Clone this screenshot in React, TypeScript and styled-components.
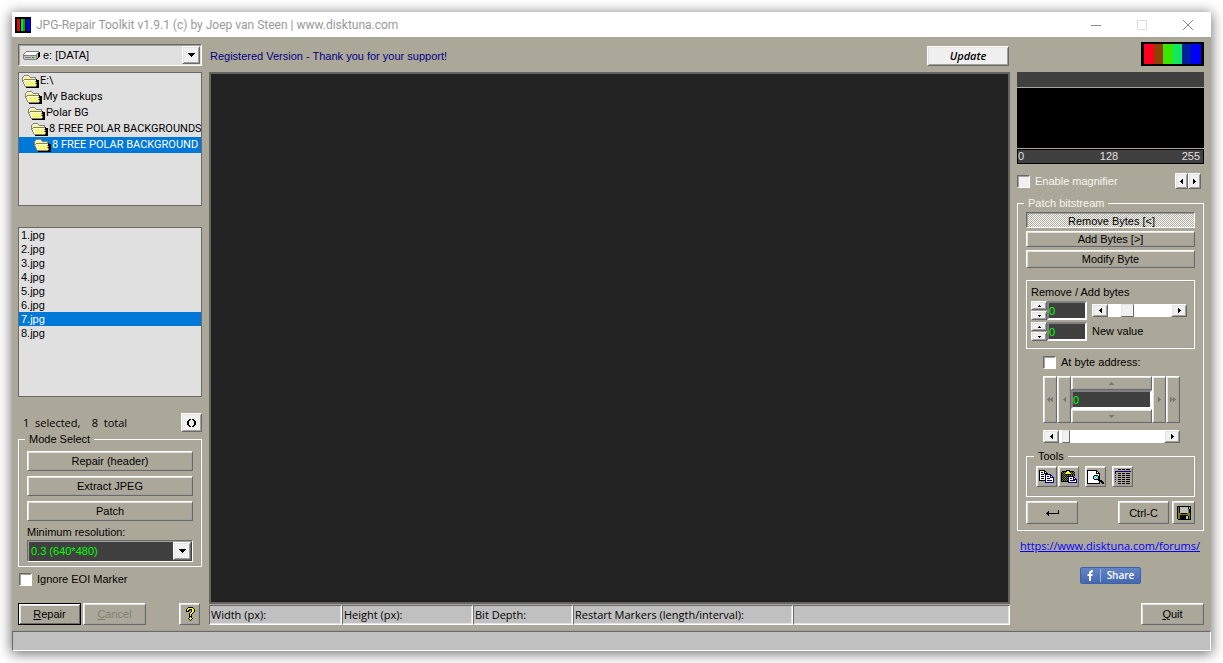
import React, { useState } from "react";
import styled, { createGlobalStyle, css } from "styled-components";

const FACE = "#aca899";
const SANS = `"Liberation Sans", Arial, sans-serif`;
const HUMAN = `"Open Sans", "Noto Sans", sans-serif`;
const NARROW = `Roboto, "Liberation Sans", sans-serif`;

const GlobalStyle = createGlobalStyle`
  *, *::before, *::after { box-sizing: border-box; }
  body { margin: 0; background: #fff; font: 11px/14px ${SANS}; color: #000; }
  button, input, select { font: inherit; color: inherit; margin: 0; padding: 0; border-radius: 0; }
  ul { list-style: none; margin: 0; padding: 0; }
`;

const raised = css`
  border: 1px solid;
  border-color: #fff #696969 #696969 #fff;
  box-shadow: inset 1px 1px 0 #e3e3e3, inset -1px -1px 0 #a0a0a0;
`;

const sunken = css`
  border: 1px solid;
  border-color: #696969 #fff #fff #696969;
`;

/* ---------- pixel icons ---------- */

const PALETTE: Record<string, string> = {
  k: "#000000",
  w: "#ffffff",
  g: "#808080",
  s: "#c0c0c0",
  y: "#ffff00",
  o: "#808000",
  b: "#000080",
  c: "#00ffff",
  n: "#00a000",
};

function PixelIcon({ rows }: { rows: string[] }) {
  const width = Math.max(...rows.map((r) => r.length));
  return (
    <svg width={width} height={rows.length} shapeRendering="crispEdges" aria-hidden="true">
      {rows.flatMap((row, y) =>
        [...row].map((ch, x) =>
          PALETTE[ch] ? <rect key={`${x}-${y}`} x={x} y={y} width={1} height={1} fill={PALETTE[ch]} /> : null,
        ),
      )}
    </svg>
  );
}

const FOLDER = [
  "..ggggg",
  ".gwwwwwg",
  "gwywywywgggggg",
  "gywywywywywywg",
  "gwggggggggggggk",
  "ggwwwwwwwwwwwwkkk",
  "gwywywywywywygkkk",
  ".gwywywywywywygkk",
  ".gwwywywywywygkkk",
  "..gwywywywywywgkk",
  "..gwwywywywywygkk",
  "...gggggggggggkkk",
  "....kkkkkkkkkkkkk",
];

const DRIVE = [
  "...ggggggggggggg",
  "..gwwwwwwwwwwwwgk",
  ".gwwwwwwwwwwwwgkk",
  "gwwwwwwwwwwwwgskk",
  "ggggggggggggggskk",
  "gssssssssssssgskk",
  "gsggggggsnnssgsk",
  "gssssssssssssgk",
  ".ggggggggggggg",
];

const COPY = [
  "kkkkkk",
  "kwwwwkk",
  "kwkkwkwk",
  "kwwwwkkkk",
  "kwkkkwbbbbbb",
  "kwwwwwbwwwwbb",
  "kwkkkwbwbbwbwb",
  "kwwwwwbwwwwbbbb",
  "kwkkkwbwbbbwwwb",
  "kwwwwwbwwwwwwwb",
  "kkkkkkbwbbbbbwb",
  "......bwwwwwwwb",
  "......bbbbbbbbb",
];

const PASTE = [
  ".....kkkk",
  ".kkkkkyykkkkk",
  "kokokyyyykokok",
  "kkokyyyyyykoko",
  "kokokkkkkkokok",
  "kkokokokokokok",
  "kokokokbbbbbb",
  "kkokokobwwwwbb",
  "kokokokbwbbwbwb",
  "kkokokobwwwwbbbb",
  "kokokokbwbbbbbwb",
  "kkkkkkkbwwwwwwwb",
  ".......bbbbbbbbb",
];

const PREVIEW = [
  "kkkkkkkkkk",
  "kwwwwwwwwkk",
  "kwwwwwwwwkwk",
  "kwwwwwwwwkkkk",
  "kwwwwwwwwwwwk",
  "kwwwwwwkkkkwk",
  "kwwwwwkcwcskk",
  "kwwwwwkwcwckk",
  "kwwwwwkcwcskk",
  "kwwwwwwkkkkkk",
  "kwwwwwwwwwwkkkk",
  "kwwwwwwwwwwwkkkk",
  "kwwwwwwwwwwwk.kkk",
  "kkkkkkkkkkkkk..kk",
];

const TABLE = [
  "...kkk.kkk.kkkk",
  "...............",
  "bbbbbbbbbbbbbbbb",
  "b...............",
  "b..kkk.kkk.kkkk",
  "...............",
  "b..kkk.kkk.kkkk",
  "...............",
  "b..kkk.kkk.kkkk",
  "...............",
  "b..kkk.kkk.kkkk",
  "...............",
  "b..kkk.kkk.kkkk",
  "...............",
  "...kkk.kkk.kkkk",
];

const SAVE = [
  "kkkkkkkkkkkkkk",
  "kokssssssssksk",
  "kokssssssssksk",
  "kokssssssssokk",
  "kokssssssssokk",
  "kokssssssssokk",
  "kokssssssssokk",
  "koookkkkkkoook",
  "kooooooooooook",
  "kookkkkkkkkook",
  "kookkkkkksskok",
  "kookkkkkksskok",
  "kookkkkkksskok",
  ".kkkkkkkkkkkkk",
];

const HELP = [
  "...kkkkk",
  "..kyyyyyk",
  ".kyykkkyyk",
  ".kykk.kyyk",
  ".kkk..kyyk",
  ".....kyyk",
  "....kyyk",
  "....kyk",
  "....kyk",
  "....kkk",
  "....kyk",
  "...kyyyk",
  "....kyk",
  ".....k",
];

const RETURN = [
  ".............k",
  "...k.........k",
  "..kk.........k",
  ".kkkkkkkkkkkkk",
  "..kk",
  "...k",
];

const REFRESH = [
  "..kk.kk..",
  ".kk...kk.",
  "kk.....kk",
  "kk.....kk",
  "kk.....kk",
  "kk.....kk",
  ".kk...kk.",
  "..kk.kk..",
];

type Direction = "left" | "right" | "up" | "down";

function Arrow({ dir, size = 4, color = "#000", double }: { dir: Direction; size?: number; color?: string; double?: boolean }) {
  const span = size * 2 - 1;
  const horizontal = dir === "left" || dir === "right";
  const w = horizontal ? (double ? size * 2 : size) : span;
  const h = horizontal ? span : size;
  const bars: React.ReactNode[] = [];
  for (let i = 0; i < size; i++) {
    const len = i * 2 + 1;
    const off = size - 1 - i;
    const at = dir === "left" || dir === "up" ? i : size - 1 - i;
    for (let n = 0; n < (double ? 2 : 1); n++) {
      bars.push(
        horizontal ? (
          <rect key={`${i}-${n}`} x={at + n * size} y={off} width={1} height={len} />
        ) : (
          <rect key={`${i}-${n}`} x={off} y={at} width={len} height={1} />
        ),
      );
    }
  }
  return (
    <svg width={w} height={h} fill={color} shapeRendering="crispEdges" aria-hidden="true">
      {bars}
    </svg>
  );
}

/* ---------- window ---------- */

const Desktop = styled.div`
  min-height: 100vh;
  padding: 12px;
  display: flex;
  overflow: hidden;
`;

const Window = styled.div`
  flex: 1;
  min-width: 0;
  display: flex;
  flex-direction: column;
  background: ${FACE};
  box-shadow: 0 2px 12px 1px rgba(0, 0, 0, 0.55);
`;

const TitleBar = styled.header`
  height: 25px;
  display: flex;
  align-items: center;
  gap: 5px;
  padding: 0 8px 0 3px;
  background: #fff;
  color: #999;
`;

const Title = styled.h1`
  flex: 1;
  margin: 0;
  font: 12px/16px ${NARROW};
`;

const CaptionButton = styled.button`
  width: 30px;
  height: 25px;
  margin-left: 11px;
  display: flex;
  align-items: center;
  justify-content: center;
  border: 0;
  background: none;
`;

const Body = styled.main`
  flex: 1;
  display: grid;
  grid-template-columns: 184px minmax(0, 1fr) 187px;
  gap: 7px;
  padding: 5px 7px 6px 6px;
`;

const Column = styled.div<{ $top?: number }>`
  display: flex;
  flex-direction: column;
  min-width: 0;
  padding-top: ${(p) => p.$top ?? 0}px;
`;

const Row = styled.div<{ $gap?: number; $top?: number; $start?: number; $end?: number }>`
  display: flex;
  align-items: center;
  gap: ${(p) => p.$gap ?? 0}px;
  margin-top: ${(p) => p.$top ?? 0}px;
  padding: 0 ${(p) => p.$end ?? 0}px 0 ${(p) => p.$start ?? 0}px;
`;

const Spacer = styled.span`
  flex: 1;
`;

const StatusBar = styled.footer`
  height: 20px;
  background: #c0c0c0;
  border: 1px solid;
  border-color: #696969 #fff #fff #696969;
  box-shadow: 0 -1px 0 #a0a0a0;
`;

/* ---------- controls ---------- */

const Button = styled.button<{ $w?: number; $h?: number; $light?: boolean; $default?: boolean }>`
  ${raised}
  ${(p) => p.$default && css`
    border-color: #000;
    box-shadow: inset 1px 1px 0 #fff, inset -1px -1px 0 #696969, inset 2px 2px 0 #e3e3e3;
  `}
  flex: none;
  display: flex;
  align-items: center;
  justify-content: center;
  width: ${(p) => (p.$w ? `${p.$w}px` : "100%")};
  height: ${(p) => p.$h ?? 20}px;
  background: ${(p) => (p.$light ? "#f0f0f0" : FACE)};
  white-space: pre;
  &:disabled { color: #808075; }
`;

const UpdateButton = styled(Button)`
  font: italic 600 11px/14px ${HUMAN};
`;

const PressedButton = styled(Button)`
  border-color: #696969 #fff #fff #696969;
  box-shadow: inset 1px 1px 0 #a0a0a0;
  background: repeating-conic-gradient(#fff 0 25%, ${FACE} 0 50%) 0 0 / 2px 2px;
  padding: 2px 0 0 2px;
`;

const ButtonStack = styled.div<{ $gap: number }>`
  display: flex;
  flex-direction: column;
  gap: ${(p) => p.$gap}px;
`;

const Combo = styled.div<{ $dark?: boolean }>`
  ${sunken}
  box-shadow: inset 1px 1px 0 #a0a0a0;
  height: 22px;
  display: grid;
  grid-template-columns: 22px 1fr 18px;
  align-items: center;
  background: ${(p) => (p.$dark ? "#404040" : "#e0e0e0")};
  color: ${(p) => (p.$dark ? "#00ff00" : "#000")};
  padding: 1px;
  svg { display: block; }
`;

const ComboSelect = styled.select<{ $indent: number }>`
  grid-area: 1 / 1 / 2 / 4;
  width: 100%;
  height: 18px;
  appearance: none;
  border: 0;
  outline: 0;
  background: transparent;
  padding-left: ${(p) => p.$indent}px;
`;

const ComboIcon = styled.span`
  grid-area: 1 / 1 / 2 / 2;
  padding-left: 3px;
  pointer-events: none;
`;

const ComboArrow = styled.span`
  ${raised}
  grid-area: 1 / 3 / 2 / 4;
  height: 18px;
  display: grid;
  place-items: center;
  background: #f0f0f0;
  pointer-events: none;
`;

const List = styled.ul<{ $h: number; $top: number }>`
  height: ${(p) => p.$h}px;
  margin-top: ${(p) => p.$top}px;
  border: 1px solid #696969;
  background: #e0e0e0;
  overflow: hidden;
`;

const ListItem = styled.li<{ $selected?: boolean }>`
  display: flex;
  align-items: center;
  height: 14px;
  padding-left: 2px;
  background: ${(p) => (p.$selected ? "#0078d7" : "transparent")};
  color: ${(p) => (p.$selected ? "#fff" : "#000")};
  white-space: nowrap;
  cursor: default;
`;

const FolderItem = styled(ListItem)<{ $depth: number }>`
  gap: 1px;
  height: 16px;
  padding-left: ${(p) => 3 + p.$depth * 3}px;
  font-family: ${NARROW};
  svg { flex: none; }
`;

const Group = styled.fieldset<{ $top?: number; $pad: string }>`
  min-width: 0;
  margin: ${(p) => p.$top ?? 0}px 0 0;
  border: 1px solid #fff;
  box-shadow: inset -1px -1px 0 #a0a0a0, inset 1px 0 0 #a0a0a0;
  padding: ${(p) => p.$pad};
`;

const Legend = styled.legend<{ $etched?: boolean }>`
  height: 14px;
  margin-left: -2px;
  padding: 0 4px;
  ${(p) => p.$etched && "color: #f6f5f0;"}
`;

const CheckLabel = styled.label<{ $off?: boolean }>`
  display: flex;
  align-items: center;
  gap: 5px;
  ${(p) => p.$off && "color: #f6f5f0;"}
`;

const CheckBox = styled.input`
  appearance: none;
  width: 13px;
  height: 13px;
  background: #fff;
  ${sunken}
  box-shadow: inset 1px 1px 0 #a0a0a0;
  &:disabled { background: #f0f0f0; }
  &:checked { background: #404040; }
`;

const Counter = styled.p`
  flex: 1;
  margin: 0;
  padding-left: 5px;
  font: 11px/14px ${HUMAN};
  white-space: pre;
`;

const FieldLabel = styled.label`
  display: block;
  line-height: 15px;
`;

const NumberBox = styled.input<{ $w?: number }>`
  width: ${(p) => (p.$w ? `${p.$w}px` : "100%")};
  min-width: 0;
  height: 19px;
  background: #404040;
  color: #00ff00;
  ${sunken}
  border-width: 2px;
  border-color: #808080 #fff #fff #808080;
  outline: 0;
`;

const SpinButtons = styled.div`
  display: flex;
  flex-direction: column;
  gap: 1px;
`;

const SubPanel = styled.section`
  margin-top: 12px;
  border: 1px solid #fff;
  box-shadow: inset -1px -1px 0 #a0a0a0, inset 1px 1px 0 #a0a0a0;
  padding: 4px 7px 7px 4px;
`;

const ScrollBar = styled.div`
  flex: 1;
  display: flex;
  min-width: 0;
  height: 13px;
  background: #fff;
`;

const ScrollRange = styled.input<{ $thumb: number }>`
  appearance: none;
  flex: 1;
  min-width: 0;
  height: 13px;
  background: #fff;
  outline: 0;
  &::-webkit-slider-thumb {
    appearance: none;
    width: ${(p) => p.$thumb}px;
    height: 13px;
    background: #f0f0f0;
    border: 1px solid;
    border-color: #e3e3e3 #696969 #696969 #e3e3e3;
  }
`;

const Navigator = styled.div`
  display: flex;
  height: 47px;
`;

const NavMiddle = styled.div`
  flex: 1;
  min-width: 0;
  display: flex;
  flex-direction: column;
`;

const AddressBlock = styled.div`
  display: flex;
  flex-direction: column;
  gap: 7px;
  margin-top: 6px;
  padding: 0 15px 0 17px;
`;

const ColorBars = styled.svg`
  display: block;
  align-self: flex-end;
  flex: none;
`;

const Histogram = styled.div`
  margin-top: 6px;
`;

const HistogramHead = styled.div`
  height: 15px;
  background: #404040;
`;

const HistogramPlot = styled.div`
  height: 62px;
  background: #000;
  border: solid ${FACE};
  border-width: 1px 0;
`;

const HistogramScale = styled.div`
  display: grid;
  grid-template-columns: 1fr auto 1fr;
  height: 15px;
  padding: 0 3px 0 0;
  border: 1px solid #000;
  background: #404040;
  color: #e0e0e0;
  line-height: 13px;
`;

const ScaleEnd = styled.span`
  text-align: right;
`;

const Notice = styled.p`
  flex: 1;
  margin: 0;
  color: #000080;
`;

const Canvas = styled.section`
  flex: 1;
  margin-top: 6px;
  border: 2px solid #646464;
  background: #222;
`;

const InfoStrip = styled.dl`
  display: grid;
  grid-template-columns: 133px 131px 100px 220px 1fr;
  margin: 1px 0 0;
`;

const InfoCell = styled.dt`
  ${sunken}
  box-shadow: inset -1px -1px 0 #e3e3e3;
  height: 20px;
  padding-left: 1px;
  background: #c0c0c0;
  font: 11px/18px ${HUMAN};
`;

const ForumLink = styled.a`
  margin-top: 7px;
  padding-left: 3px;
  color: #0000ff;
  font: 11px/16px ${HUMAN};
`;

const ShareButton = styled.button`
  display: grid;
  grid-template-columns: 19px 1fr;
  align-items: center;
  align-self: center;
  width: 61px;
  height: 17px;
  margin-top: 13px;
  border: 1px solid #3f62a6;
  border-radius: 2px;
  background: linear-gradient(#6285c6, #4468b0);
  color: #fff;
  font: 600 10px/15px ${HUMAN};
  svg { display: block; }
`;

const ShareText = styled.span`
  border-left: 1px solid #9db4dd;
  height: 13px;
  line-height: 13px;
`;

const BottomRow = styled(Row)`
  margin-top: auto;
`;

const FOLDERS = ["E:\\", "My Backups", "Polar BG", "8 FREE POLAR BACKGROUNDS", "8 FREE POLAR BACKGROUND"];
const FILES = Array.from({ length: 8 }, (_, i) => `${i + 1}.jpg`);
const MODES = ["Repair (header)", "Extract JPEG", "Patch"];

function Spinner({ id, label }: { id: string; label: string }) {
  return (
    <Row>
      <SpinButtons>
        <Button $w={16} $h={9} $light aria-label="Increase"><Arrow dir="up" size={2} /></Button>
        <Button $w={16} $h={9} $light aria-label="Decrease"><Arrow dir="down" size={2} /></Button>
      </SpinButtons>
      <NumberBox id={id} $w={40} defaultValue="0" aria-label={label} />
    </Row>
  );
}

function Scroll({ label, value, thumb }: { label: string; value: number; thumb: number }) {
  return (
    <ScrollBar>
      <Button $w={16} $h={13} $light aria-label={`${label} back`}><Arrow dir="left" size={3} /></Button>
      <ScrollRange type="range" $thumb={thumb} defaultValue={value} aria-label={label} />
      <Button $w={16} $h={13} $light aria-label={`${label} forward`}><Arrow dir="right" size={3} /></Button>
    </ScrollBar>
  );
}

function NavButton({ label, dir, double }: { label: string; dir: Direction; double?: boolean }) {
  const vertical = dir === "up" || dir === "down";
  return (
    <Button $w={vertical ? undefined : 14} $h={vertical ? 14 : 47} disabled aria-label={label}>
      <Arrow dir={dir} size={3} color="#777" double={double} />
    </Button>
  );
}

export default function App() {
  const [folder, setFolder] = useState(4);
  const [file, setFile] = useState(6);

  return (
    <Desktop>
      <GlobalStyle />
      <Window>
        <TitleBar>
          <svg width="16" height="16" shapeRendering="crispEdges" aria-hidden="true">
            <rect width="16" height="16" fill="#000" />
            <rect x="2" y="2" width="3" height="12" fill="#f00018" />
            <rect x="6" y="2" width="2" height="12" fill="#00f000" />
            <rect x="8" y="2" width="2" height="12" fill="#00a030" />
            <rect x="11" y="2" width="2" height="12" fill="#0000a0" />
            <rect x="13" y="2" width="2" height="12" fill="#0000ff" />
          </svg>
          <Title>JPG-Repair Toolkit v1.9.1 (c) by Joep van Steen | www.disktuna.com</Title>
          <CaptionButton aria-label="Minimize">
            <svg width="10" height="10"><path d="M0 5.5h10" stroke="#888" /></svg>
          </CaptionButton>
          <CaptionButton aria-label="Maximize" disabled>
            <svg width="10" height="10"><path d="M.5 .5h9v9h-9z" fill="none" stroke="#ddd" /></svg>
          </CaptionButton>
          <CaptionButton aria-label="Close">
            <svg width="10" height="10"><path d="M0 0l10 10M10 0L0 10" stroke="#888" /></svg>
          </CaptionButton>
        </TitleBar>

        <Body>
          <Column $top={2}>
            <Combo>
              <ComboSelect $indent={23} aria-label="Drive">
                <option>e: [DATA]</option>
              </ComboSelect>
              <ComboIcon><PixelIcon rows={DRIVE} /></ComboIcon>
              <ComboArrow><Arrow dir="down" /></ComboArrow>
            </Combo>

            <List $h={134} $top={6} role="listbox" aria-label="Folders">
              {FOLDERS.map((name, i) => (
                <FolderItem key={i} $depth={i} $selected={i === folder} role="option" aria-selected={i === folder} onClick={() => setFolder(i)}>
                  <PixelIcon rows={FOLDER} />
                  {name}
                </FolderItem>
              ))}
            </List>

            <List $h={170} $top={21} role="listbox" aria-label="Files">
              {FILES.map((name, i) => (
                <ListItem key={name} $selected={i === file} role="option" aria-selected={i === file} onClick={() => setFile(i)}>
                  {name}
                </ListItem>
              ))}
            </List>

            <Row $top={16}>
              <Counter>{"1  selected,    8  total"}</Counter>
              <Button $w={21} $h={19} $light aria-label="Refresh"><PixelIcon rows={REFRESH} /></Button>
            </Row>

            <Group $pad="5px 8px 4px">
              <Legend>Mode Select</Legend>
              <ButtonStack $gap={5}>
                {MODES.map((mode) => <Button key={mode}>{mode}</Button>)}
              </ButtonStack>
              <Row $top={4}>
                <FieldLabel htmlFor="resolution">Minimum resolution:</FieldLabel>
              </Row>
              <Combo $dark>
                <ComboSelect $indent={2} id="resolution">
                  <option>0.3 (640*480)</option>
                </ComboSelect>
                <ComboArrow><Arrow dir="down" /></ComboArrow>
              </Combo>
            </Group>

            <Row $top={5} $start={1}>
              <CheckLabel>
                <CheckBox type="checkbox" />
                Ignore EOI Marker
              </CheckLabel>
            </Row>

            <BottomRow $gap={2} $end={2}>
              <Button $w={63} $h={22} $default><u>R</u>epair</Button>
              <Button $w={63} $h={22} disabled><u>C</u>ancel</Button>
              <Spacer />
              <Button $w={21} $h={22} aria-label="Help"><PixelIcon rows={HELP} /></Button>
            </BottomRow>
          </Column>

          <Column>
            <Row $top={4} $start={1} $end={1}>
              <Notice>Registered Version - Thank you for your support!</Notice>
              <UpdateButton $w={82} $light>Update</UpdateButton>
            </Row>
            <Canvas aria-label="Image preview" />
            <InfoStrip>
              <InfoCell>Width (px):</InfoCell>
              <InfoCell>Height (px):</InfoCell>
              <InfoCell>Bit Depth:</InfoCell>
              <InfoCell>Restart Markers (length/interval):</InfoCell>
              <InfoCell />
            </InfoStrip>
          </Column>

          <Column>
            <ColorBars width="63" height="24" shapeRendering="crispEdges" role="img" aria-label="Color bars">
              <rect width="63" height="24" fill="#000" />
              <rect x="3" y="2" width="10" height="20" fill="#ff0020" />
              <rect x="13" y="2" width="9" height="20" fill="#904000" />
              <rect x="22" y="2" width="10" height="20" fill="#38e800" />
              <rect x="32" y="2" width="9" height="20" fill="#10e860" />
              <rect x="41" y="2" width="9" height="20" fill="#0020a0" />
              <rect x="50" y="2" width="10" height="20" fill="#0000ff" />
            </ColorBars>

            <Histogram>
              <HistogramHead />
              <HistogramPlot />
              <HistogramScale>
                <span>0</span>
                <span>128</span>
                <ScaleEnd>255</ScaleEnd>
              </HistogramScale>
            </Histogram>

            <Row $top={9} $end={3}>
              <CheckLabel $off>
                <CheckBox type="checkbox" disabled />
                Enable magnifier
              </CheckLabel>
              <Spacer />
              <Button $w={13} $h={16} $light aria-label="Previous"><Arrow dir="left" size={3} /></Button>
              <Button $w={13} $h={16} $light aria-label="Next"><Arrow dir="right" size={3} /></Button>
            </Row>

            <Group $top={7} $pad="2px 8px 6px">
              <Legend $etched>Patch bitstream</Legend>
              <ButtonStack $gap={3}>
                <PressedButton $h={16} aria-pressed="true">{"Remove Bytes [<]"}</PressedButton>
                <Button $h={16}>{"Add Bytes [>]"}</Button>
                <Button $h={18}>Modify Byte</Button>
              </ButtonStack>

              <SubPanel>
                <FieldLabel htmlFor="count">Remove / Add bytes</FieldLabel>
                <Row $gap={5} $top={1}>
                  <Spinner id="count" label="Remove / Add bytes" />
                  <Scroll label="Byte count" value={25} thumb={13} />
                </Row>
                <Row $gap={5} $top={2}>
                  <Spinner id="value" label="New value" />
                  <FieldLabel htmlFor="value">New value</FieldLabel>
                </Row>
              </SubPanel>

              <AddressBlock>
                <CheckLabel>
                  <CheckBox type="checkbox" />
                  At byte address:
                </CheckLabel>
                <Navigator>
                  <NavButton label="First" dir="left" double />
                  <NavButton label="Back" dir="left" />
                  <NavMiddle>
                    <NavButton label="Up" dir="up" />
                    <NumberBox defaultValue="0" aria-label="Byte address" />
                    <NavButton label="Down" dir="down" />
                  </NavMiddle>
                  <NavButton label="Forward" dir="right" />
                  <NavButton label="Last" dir="right" double />
                </Navigator>
                <Scroll label="Byte position" value={3} thumb={8} />
              </AddressBlock>

              <Group $top={6} $pad="3px 9px 9px">
                <Legend>Tools</Legend>
                <Row $gap={6}>
                  <Row $gap={1}>
                    <Button $w={21} $h={21} aria-label="Copy"><PixelIcon rows={COPY} /></Button>
                    <Button $w={21} $h={21} aria-label="Paste"><PixelIcon rows={PASTE} /></Button>
                  </Row>
                  <Button $w={21} $h={21} aria-label="Preview"><PixelIcon rows={PREVIEW} /></Button>
                  <Button $w={21} $h={21} aria-label="Table"><PixelIcon rows={TABLE} /></Button>
                </Row>
              </Group>

              <Row $top={4} $gap={3}>
                <Button $w={52} $h={23} aria-label="Apply"><PixelIcon rows={RETURN} /></Button>
                <Spacer />
                <Button $w={51} $h={23}>Ctrl-C</Button>
                <Button $w={23} $h={23} aria-label="Save"><PixelIcon rows={SAVE} /></Button>
              </Row>
            </Group>

            <ForumLink href="https://www.disktuna.com/forums/">https://www.disktuna.com/forums/</ForumLink>

            <ShareButton>
              <svg width="19" height="13" aria-hidden="true">
                <path d="M9 12V4.500Q9 2 12 2M6.500 6h5" fill="none" stroke="#fff" strokeWidth="2" />
              </svg>
              <ShareText>Share</ShareText>
            </ShareButton>

            <BottomRow>
              <Spacer />
              <Button $w={63} $h={22}><u>Q</u>uit</Button>
            </BottomRow>
          </Column>
        </Body>
        <StatusBar />
      </Window>
    </Desktop>
  );
}
